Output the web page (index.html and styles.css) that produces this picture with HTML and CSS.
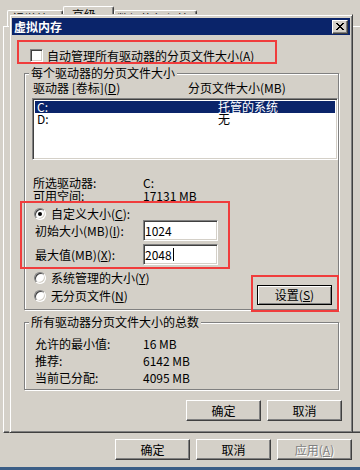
FILE: index.html
```html
<!DOCTYPE html>
<html lang="zh-CN">
<head>
    <meta charset="UTF-8">
    <meta name="viewport" content="width=device-width, initial-scale=1.0">
    <title>虚拟内存</title>
    <link rel="stylesheet" href="styles.css">
</head>
<body>
    <div class="screen">
        <div class="props">
            <div class="tabs">
                <div class="tab tab-visual">视觉效果</div>
                <div class="tab tab-active">高级</div>
                <div class="tab tab-dep">数据执行保护</div>
            </div>
            <div class="tab-panel"></div>
            <div class="props-buttons">
                <div class="btn">确定</div>
                <div class="btn">取消</div>
                <div class="btn btn-disabled">应用(<u>A</u>)</div>
            </div>
            <div class="desktop-strip"></div>
        </div>

        <div class="vm-dialog">
            <div class="title-bar">
                <span class="title-text">虚拟内存</span>
                <span class="close-btn">
                    <svg width="8" height="7" viewBox="0 0 8 7" shape-rendering="crispEdges"><path d="M0 0h2v1H0zM6 0h2v1H6zM1 1h2v1H1zM5 1h2v1H5zM2 2h4v1H2zM3 3h2v1H3zM2 4h4v1H2zM1 5h2v1H1zM5 5h2v1H5zM0 6h2v1H0zM6 6h2v1H6z" fill="#000"/></svg>
                </span>
            </div>
            <div class="vm-body">
                <div class="auto-row">
                    <span class="checkbox"></span>
                    <span>自动管理所有驱动器的分页文件大小(<u>A</u>)</span>
                </div>

                <div class="group group-drives">
                    <div class="group-title">每个驱动器的分页文件大小</div>
                    <div class="list-header">
                        <span class="col-drive">驱动器 [卷标](<u>D</u>)</span>
                        <span>分页文件大小(MB)</span>
                    </div>
                    <div class="listbox">
                        <div class="list-row selected"><span class="col-name">C:</span><span>托管的系统</span></div>
                        <div class="list-row"><span class="col-name">D:</span><span>无</span></div>
                    </div>
                    <div class="info-row first"><span class="info-label">所选驱动器:</span><span>C:</span></div>
                    <div class="info-row"><span class="info-label">可用空间:</span><span>17131 MB</span></div>
                    <div class="radio-row custom"><span class="radio checked"></span><span>自定义大小(<u>C</u>):</span></div>
                    <div class="field-row">
                        <span class="field-label">初始大小(MB)(<u>I</u>):</span>
                        <div class="field">1024</div>
                    </div>
                    <div class="field-row second">
                        <span class="field-label">最大值(MB)(<u>X</u>):</span>
                        <div class="field">2048<span class="caret"></span></div>
                    </div>
                    <div class="options-row">
                        <div class="options">
                            <div class="radio-row"><span class="radio"></span><span>系统管理的大小(<u>Y</u>)</span></div>
                            <div class="radio-row"><span class="radio"></span><span>无分页文件(<u>N</u>)</span></div>
                        </div>
                        <div class="btn btn-default">设置(<u>S</u>)</div>
                    </div>
                </div>

                <div class="group group-total">
                    <div class="group-title">所有驱动器分页文件大小的总数</div>
                    <div class="total-row first"><span class="total-label">允许的最小值:</span><span>16 MB</span></div>
                    <div class="total-row"><span class="total-label">推荐:</span><span>6142 MB</span></div>
                    <div class="total-row"><span class="total-label">当前已分配:</span><span>4095 MB</span></div>
                </div>

                <div class="dialog-buttons">
                    <div class="btn">确定</div>
                    <div class="btn">取消</div>
                </div>
            </div>

            <!-- red annotation frames -->
            <div class="mark mark-auto"></div>
            <div class="mark mark-custom"></div>
            <div class="mark mark-set"></div>
        </div>
    </div>
</body>
</html>
```

FILE: styles.css
```css
* {
    box-sizing: border-box;
}
body {
    margin: 0;
    background-color: #d4d0c8;
    font-family: "Noto Sans CJK SC", sans-serif;
    font-size: 12px;
    line-height: 12px;
    color: #000;
}
u {
    text-underline-offset: 1px;
}
.screen {
    position: relative;
    width: 360px;
    height: 470px;
    overflow: hidden;
}

/* window behind: performance options */
.tabs {
    display: flex;
    align-items: flex-end;
    height: 26px;
    padding-left: 7px;
}
.tab {
    height: 16px;
    padding: 2px 0 0 4px;
    border: 1px solid #fff;
    border-right-color: #404040;
    border-bottom: none;
    border-radius: 2px 2px 0 0;
    box-shadow: inset -1px 0 #808080;
    white-space: nowrap;
    overflow: hidden;
}
.tab-visual {
    width: 56px;
}
.tab-active {
    width: 51px;
    height: 20px;
    padding-left: 8px;
}
.tab-dep {
    width: 83px;
    padding-left: 2px;
}
.tab-panel {
    margin-left: 3px;
    width: 380px;
    height: 407px;
    border: 1px solid;
    border-color: #fff #404040 #404040 #fff;
    box-shadow: inset -1px -1px #808080;
}
.props-buttons {
    display: flex;
    justify-content: flex-end;
    gap: 6px;
    margin-top: 6px;
    padding-right: 8px;
}
.desktop-strip {
    margin-top: 7px;
    height: 3px;
    background-color: #3b5e86;
}

/* buttons */
.btn {
    width: 75px;
    height: 21px;
    display: flex;
    align-items: center;
    justify-content: center;
    background-color: #d4d0c8;
    border: 1px solid;
    border-color: #fff #404040 #404040 #fff;
    box-shadow: inset -1px -1px #808080;
}
.btn-disabled {
    color: #808080;
    text-shadow: 1px 1px #fff;
}
.btn-default {
    height: 20px;
    margin-right: 6px;
    border-color: #000;
    box-shadow: inset 1px 1px #fff, inset -1px -1px #808080;
}

/* virtual memory dialog */
.vm-dialog {
    position: absolute;
    left: 9px;
    top: 14px;
    width: 344px;
    height: 419px;
    padding: 3px 2px 2px 2px;
    background-color: #d4d0c8;
    border: 1px solid;
    border-color: #d4d0c8 #404040 #404040 #d4d0c8;
    box-shadow: inset 1px 1px #fff, inset -1px -1px #808080;
}
.title-bar {
    height: 17px;
    display: flex;
    align-items: center;
    justify-content: space-between;
    padding: 0 2px;
    background-color: #0a246a;
    color: #fff;
    font-weight: bold;
}
.close-btn {
    width: 16px;
    height: 14px;
    display: flex;
    align-items: center;
    justify-content: center;
    background-color: #d4d0c8;
    border: 1px solid;
    border-color: #fff #404040 #404040 #fff;
    box-shadow: inset -1px -1px #808080;
}
.close-btn svg {
    display: block;
}
.vm-body {
    padding: 0 8px 0 12px;
}
.auto-row {
    display: flex;
    align-items: center;
    gap: 4px;
    height: 13px;
    margin-top: 14px;
    padding-left: 6px;
}
.checkbox {
    width: 13px;
    height: 13px;
    flex-shrink: 0;
    background-color: #fff;
    border: 1px solid;
    border-color: #808080 #fff #fff #808080;
    box-shadow: inset 1px 1px #404040, inset -1px -1px #d4d0c8;
}

/* group boxes */
.group {
    margin-right: 3px;
    padding-left: 7px;
    border: 1px solid #808080;
    box-shadow: inset 1px 1px #fff, 1px 1px #fff;
}
.group-title {
    width: fit-content;
    margin: -7px 0 0 -3px;
    padding: 0 2px;
    background-color: #d4d0c8;
}
.group-drives {
    margin-top: 11px;
    padding-bottom: 4px;
}
.group-total {
    margin-top: 12px;
    padding-bottom: 3px;
}

.list-header {
    display: flex;
    margin-top: 3px;
    padding-left: 1px;
}
.col-drive {
    width: 155px;
}
.listbox {
    height: 62px;
    margin-top: 4px;
    padding: 2px;
    background-color: #fff;
    border: 1px solid;
    border-color: #808080 #fff #fff #808080;
    box-shadow: inset 1px 1px #404040, inset -1px -1px #d4d0c8;
}
.list-row {
    display: flex;
    height: 12px;
    padding-left: 2px;
}
.list-row.selected {
    background-color: #0a246a;
    color: #fff;
}
.col-name {
    width: 181px;
}

.info-row {
    display: flex;
    height: 13px;
    line-height: 13px;
    padding-left: 1px;
}
.info-row.first {
    margin-top: 16px;
}
.info-label {
    width: 110px;
}

.radio-row {
    display: flex;
    align-items: center;
    gap: 5px;
    height: 13px;
    padding-left: 2px;
}
.radio-row.custom {
    margin-top: 5px;
}
.radio {
    position: relative;
    width: 12px;
    height: 12px;
    flex-shrink: 0;
    border-radius: 50%;
    background-color: #fff;
    border: 1px solid;
    border-color: #808080 #fff #fff #808080;
    box-shadow: inset 1px 1px #404040, inset -1px -1px #d4d0c8;
}
.radio.checked::after {
    content: "";
    position: absolute;
    left: 3px;
    top: 3px;
    width: 4px;
    height: 4px;
    border-radius: 50%;
    background-color: #000;
}

.field-row {
    display: flex;
    align-items: center;
    height: 21px;
    padding-left: 3px;
}
.field-row.second {
    margin-top: 3px;
}
.field-label {
    width: 108px;
}
.field {
    width: 75px;
    height: 21px;
    display: flex;
    align-items: center;
    padding-left: 1px;
    background-color: #fff;
    border: 1px solid;
    border-color: #808080 #fff #fff #808080;
    box-shadow: inset 1px 1px #404040, inset -1px -1px #d4d0c8;
}
.caret {
    width: 1px;
    height: 13px;
    margin-left: 1px;
    background-color: #000;
}

.options-row {
    display: flex;
    justify-content: space-between;
    align-items: flex-end;
    margin-top: 6px;
}
.options {
    display: flex;
    flex-direction: column;
    gap: 5px;
    margin-bottom: 3px;
}

.total-row {
    display: flex;
    height: 17px;
    line-height: 17px;
    padding-left: 3px;
}
.total-row.first {
    margin-top: 7px;
}
.total-label {
    width: 108px;
}

.dialog-buttons {
    display: flex;
    justify-content: flex-end;
    gap: 6px;
    margin-top: 10px;
}

/* red annotation frames */
.mark {
    position: absolute;
    border: 2px solid #f03c3c;
}
.mark-auto {
    left: 7px;
    top: 25px;
    width: 260px;
    height: 24px;
}
.mark-custom {
    left: 10px;
    top: 186px;
    width: 210px;
    height: 68px;
}
.mark-set {
    left: 241px;
    top: 260px;
    width: 88px;
    height: 37px;
}
```
